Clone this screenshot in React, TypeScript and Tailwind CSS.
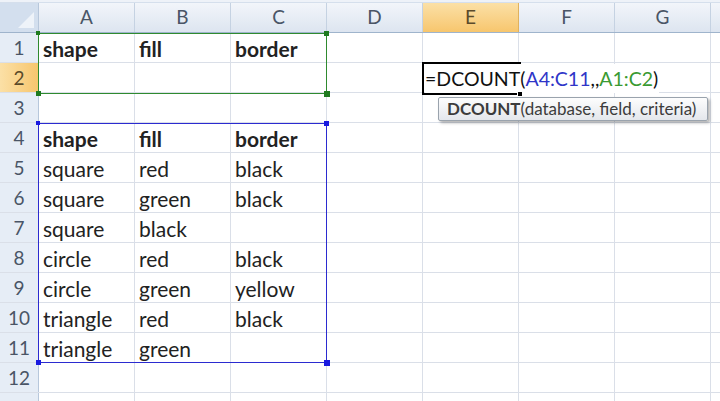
const cols = ['A', 'B', 'C', 'D', 'E', 'F', 'G', ''];

const data: Record<number, { text: string; bold?: boolean }[]> = {
  1: [{ text: 'shape', bold: true }, { text: 'fill', bold: true }, { text: 'border', bold: true }],
  4: [{ text: 'shape', bold: true }, { text: 'fill', bold: true }, { text: 'border', bold: true }],
  5: [{ text: 'square' }, { text: 'red' }, { text: 'black' }],
  6: [{ text: 'square' }, { text: 'green' }, { text: 'black' }],
  7: [{ text: 'square' }, { text: 'black' }, { text: '' }],
  8: [{ text: 'circle' }, { text: 'red' }, { text: 'black' }],
  9: [{ text: 'circle' }, { text: 'green' }, { text: 'yellow' }],
  10: [{ text: 'triangle' }, { text: 'red' }, { text: 'black' }],
  11: [{ text: 'triangle' }, { text: 'green' }, { text: '' }],
};

// row 13 only peeks in at the bottom edge, its number is not visible
const rows = [1, 2, 3, 4, 5, 6, 7, 8, 9, 10, 11, 12, 13];

// selection outline over a cell range, with the small handles at its corners
function RangeBox({ top, height, green }: { top: number; height: number; green?: boolean }) {
  const dot = green ? 'bg-[#1f7a1f]' : 'bg-[#1a1ae0]';
  return (
    <div
      className={`absolute left-[38px] w-[289px] border-[1.5px] pointer-events-none ${green ? 'border-[#2f8a2f]' : 'border-[#2b2bd0]'}`}
      style={{ top, height }}
    >
      <div className={`absolute -left-[3px] -top-[3px] w-[4px] h-[4px] ${dot}`} />
      <div className={`absolute -right-[3px] -top-[3px] w-[5px] h-[5px] ${dot}`} />
      <div className={`absolute -left-[3px] -bottom-[3px] w-[5px] h-[5px] ${dot}`} />
      <div className={`absolute -right-[4px] -bottom-[4px] w-[6px] h-[6px] ${dot}`} />
    </div>
  );
}

export default function App() {
  return (
    <div className="relative w-[720px] h-[401px] overflow-hidden bg-white" style={{ fontFamily: 'Lato, "Open Sans", sans-serif' }}>
      {/* top strip */}
      <div className="h-[3px] bg-[#eef2f8] border-b border-[#d5dfec]" />
      {/* column headers */}
      <div className="flex h-[30px] border-b border-[#9fb4cc]">
        <div className="relative w-[39px] shrink-0 bg-[#d3dfee] border-r border-[#b7c7db]">
          <div className="absolute right-[4px] bottom-[4px] w-0 h-0 border-l-[16px] border-l-transparent border-b-[16px] border-b-[#eef3f9]" />
        </div>
        {cols.map((c) => (
          <div
            key={c || 'h'}
            className={`w-[96px] shrink-0 flex items-center justify-center text-[19px] border-r ${
              c === 'E'
                ? 'bg-gradient-to-b from-[#fbe0a6] to-[#f7c66d] border-[#e0b25e] text-[#5a4a2a]'
                : 'bg-gradient-to-b from-[#f2f5fa] to-[#dde5f0] border-[#c5d2e2] text-[#4a5566]'
            }`}
          >
            {c}
          </div>
        ))}
      </div>
      {rows.map((r) => (
        <div key={r} className="flex h-[30px] border-b border-[#dadfe8]">
          <div
            className={`w-[39px] shrink-0 flex items-center justify-center pt-[1px] text-[19px] border-r ${
              r === 2
                ? 'bg-gradient-to-r from-[#fbe0a6] to-[#f7c66d] border-[#e0b25e] text-[#5a4a2a]'
                : 'bg-[#e6edf6] border-[#b7c7db] text-[#4a5566]'
            }`}
          >
            {r < 13 ? r : ''}
          </div>
          {cols.map((c, i) => {
            const cell = data[r]?.[i];
            return (
              <div
                key={c || 'h'}
                className={`w-[96px] shrink-0 flex items-center pl-[4px] pt-[2px] text-[21px] text-[#222] whitespace-nowrap border-r border-[#dadfe8] ${
                  cell?.bold ? 'font-bold' : ''
                }`}
              >
                {cell?.text}
              </div>
            );
          })}
        </div>
      ))}

      <RangeBox top={33} height={61} green />
      <RangeBox top={123} height={240} />

      {/* active cell E2, formula overflows its right edge */}
      <div className="absolute left-[422px] top-[62px] w-[99px] h-[33px] border-[2.5px] border-black">
        <div className="flex items-center h-full pl-[1px] text-[19.5px] text-[#111] whitespace-nowrap">
          <span className="bg-white pr-[1px]">
            =DCOUNT(<span className="text-[#2f35c8]">A4:C11</span>,,<span className="text-[#3a9a32]">A1:C2</span>)
          </span>
        </div>
        <div className="absolute -right-[4px] -bottom-[4px] w-[6px] h-[6px] bg-black border border-white" />
      </div>

      {/* function tooltip */}
      <div className="absolute left-[438px] top-[97px] w-[270px] h-[24px] flex items-center pl-[8px] text-[17px] text-[#3c3c3c] whitespace-nowrap rounded-[2px] border border-[#9aa3ad] bg-gradient-to-b from-[#fdfdfd] to-[#e4e7ec] shadow-[2px_2px_3px_rgba(0,0,0,0.3)]">
        <span className="font-bold">DCOUNT</span>(database, field, criteria)
      </div>
    </div>
  );
}
